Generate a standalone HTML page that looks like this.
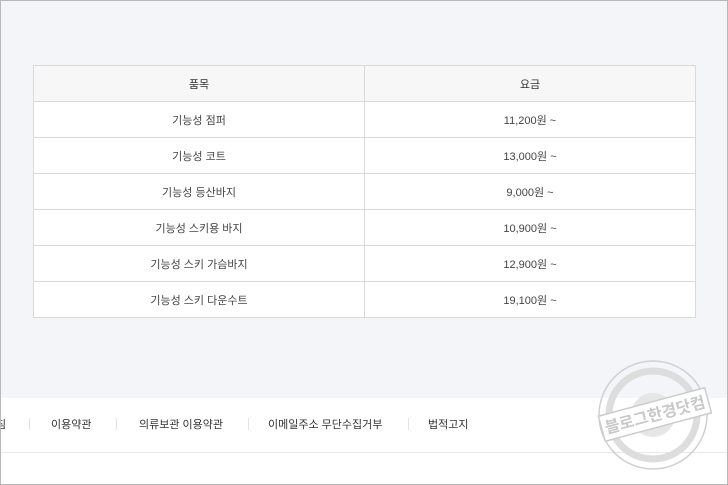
<!DOCTYPE html>
<html><head><meta charset="utf-8"><style>
*{margin:0;padding:0;box-sizing:border-box}
body{width:728px;height:485px;overflow:hidden;font-family:"Liberation Sans","Noto Sans CJK KR",sans-serif;background:#fff;position:relative}
.frame{position:absolute;left:0;top:0;width:728px;height:485px;border:1px solid #b8b8b8;pointer-events:none;z-index:5}
.top{position:absolute;left:0;top:0;width:728px;height:398px;background:#f4f5f9}
table{position:absolute;left:33px;top:65px;width:663px;border-collapse:collapse;background:#fff;font-size:11px;color:#444}
td,th{border:1px solid #d9d9d9;height:36px;text-align:center;font-weight:normal;width:50%}
th{background:#f7f7f7;color:#333}
td:first-child,th:first-child{width:331px}
.foot{position:absolute;top:416px;left:0;font-size:11px;color:#333;white-space:nowrap}
.foot span{position:absolute}
.sep{position:absolute;top:418px;width:1px;height:12px;background:#e3e3e3}
.line{position:absolute;left:0;top:452px;width:728px;height:1px;background:#e8e8e8}
</style></head><body>
<div class="top"></div>
<table>
<tr><th>품목</th><th>요금</th></tr>
<tr><td>기능성 점퍼</td><td>11,200원 ~</td></tr>
<tr><td>기능성 코트</td><td>13,000원 ~</td></tr>
<tr><td>기능성 등산바지</td><td>9,000원 ~</td></tr>
<tr><td>기능성 스키용 바지</td><td>10,900원 ~</td></tr>
<tr><td>기능성 스키 가슴바지</td><td>12,900원 ~</td></tr>
<tr><td>기능성 스키 다운수트</td><td>19,100원 ~</td></tr>
</table>
<div class="foot">
<span style="left:-4px">침</span>
<span style="left:51px">이용약관</span>
<span style="left:139px">의류보관 이용약관</span>
<span style="left:268px">이메일주소 무단수집거부</span>
<span style="left:428px">법적고지</span>
</div>
<div class="sep" style="left:29px"></div>
<div class="sep" style="left:116px"></div>
<div class="sep" style="left:248px"></div>
<div class="sep" style="left:408px"></div>
<div class="line"></div>
<svg style="position:absolute;left:595px;top:360px" width="120" height="120" viewBox="0 0 120 120">
<circle cx="58" cy="55" r="54" fill="none" stroke="#d0d0d0" stroke-width="1.5"/>
<circle cx="58" cy="55" r="44" fill="none" stroke="#ddd" stroke-width="7"/>
<circle cx="58" cy="55" r="22" fill="#e6e6e6"/>
<g transform="rotate(-15 58 55)"><rect x="5" y="42" width="110" height="26" fill="#fff" stroke="#ccc" stroke-width="1.5"/>
<text x="60" y="61" text-anchor="middle" font-size="16" fill="#c8c8c8" font-weight="bold" font-family="Noto Sans CJK KR,sans-serif">블로그한경닷컴</text></g>
</svg>
<div class="frame"></div>
</body></html>
